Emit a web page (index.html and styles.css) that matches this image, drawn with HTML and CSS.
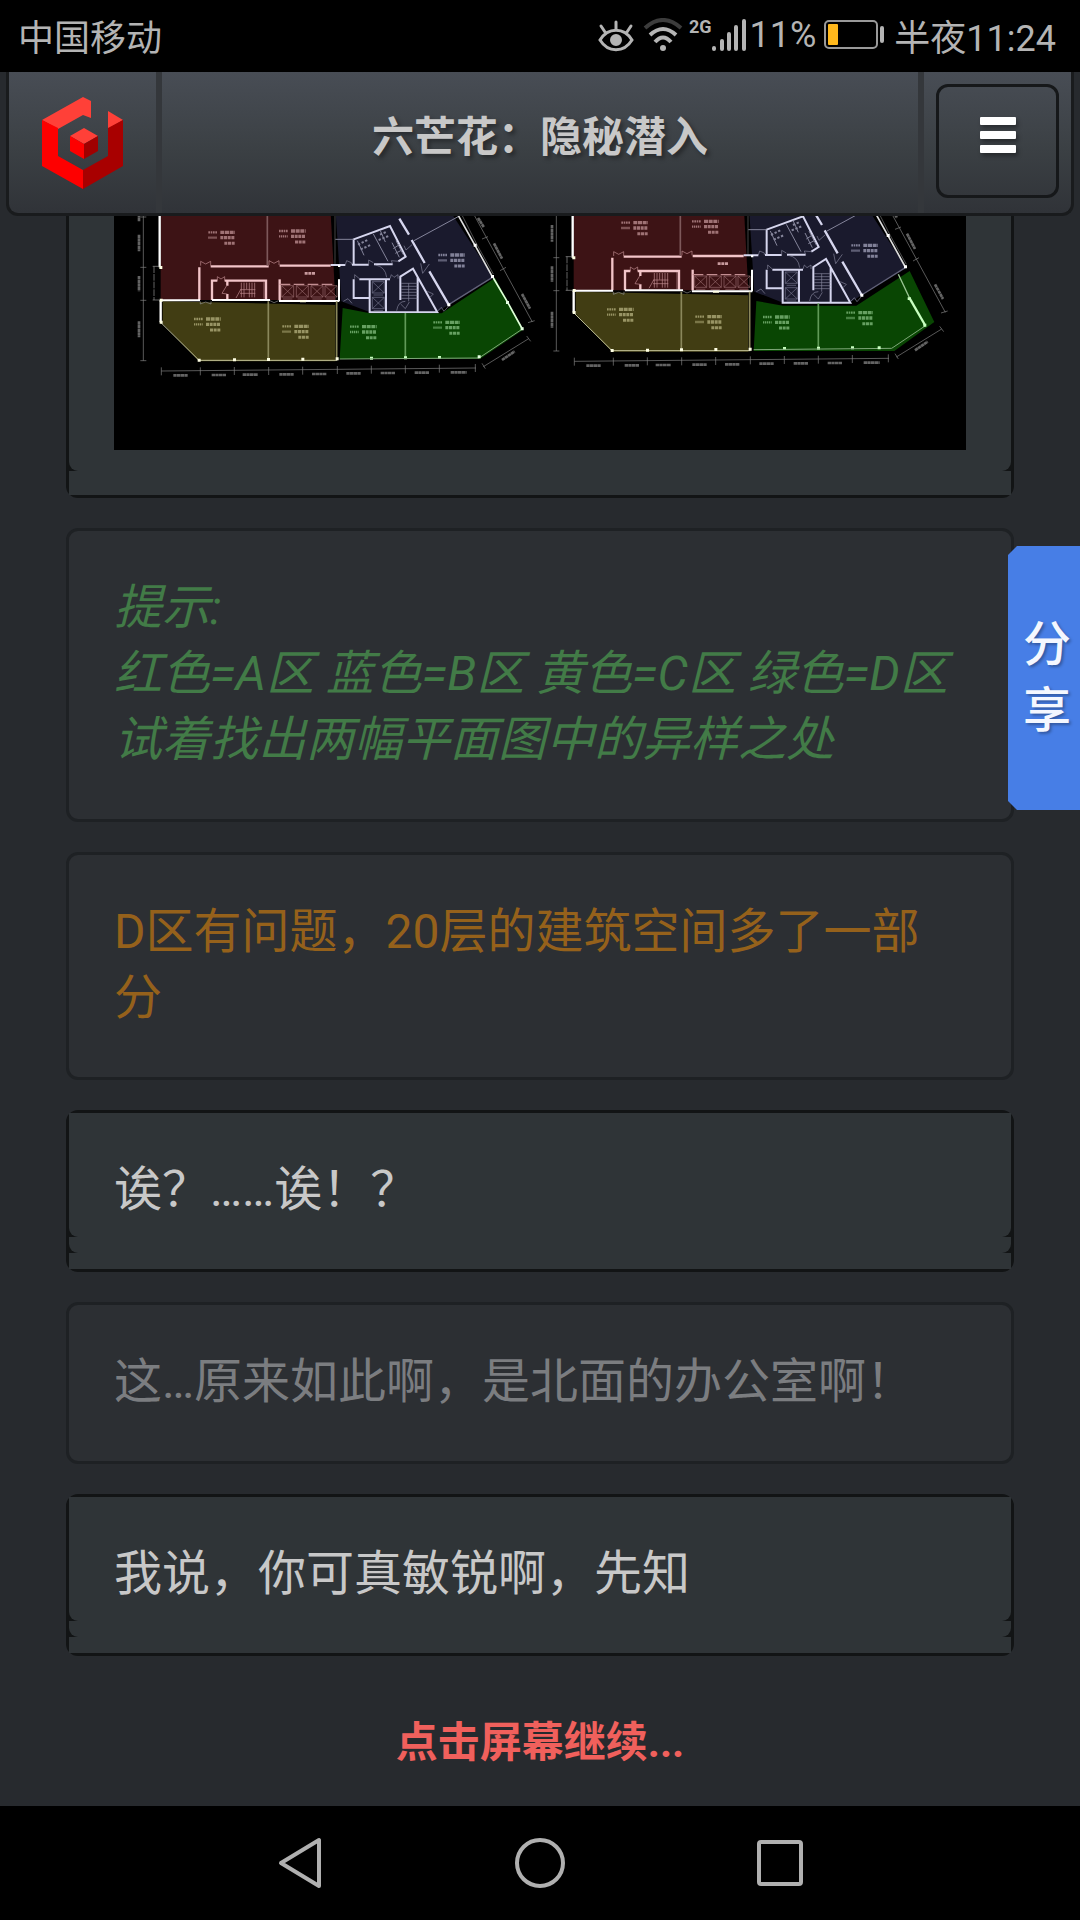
FILE: index.html
```html
<!DOCTYPE html>
<html lang="zh-CN">
<head>
    <meta charset="UTF-8">
    <meta name="viewport" content="width=device-width, initial-scale=1.0">
    <title>六芒花：隐秘潜入</title>
    <link rel="stylesheet" href="styles.css">
</head>
<body>
    <!-- 状态栏 -->
    <div class="status-bar">
        <span>中国移动</span>
        <div class="status-right">
            <svg class="eye" width="36" height="34" viewBox="0 0 36 34" fill="none" stroke="#b4b4b4" stroke-width="3" stroke-linecap="round">
                <path d="M2 22C10 9 26 9 34 22C26 35 10 35 2 22Z"/>
                <circle cx="18" cy="22" r="5" fill="#b4b4b4" stroke="#b4b4b4" stroke-width="2"/>
                <path d="M18 11V4M7 14L3 8M29 14L33 8"/>
            </svg>
            <svg class="wifi" width="40" height="34" viewBox="0 0 40 34" fill="none" stroke="#b4b4b4" stroke-width="4">
                <path d="M2 10Q20 -6 38 10" stroke="#3c3c3c"/>
                <path d="M7 17Q20 5 33 17"/>
                <path d="M12 24Q20 15 28 24"/>
                <circle cx="20" cy="30" r="3" fill="#b4b4b4" stroke="none"/>
            </svg>
            <span class="net">2G</span>
            <svg class="signal" width="34" height="34" viewBox="0 0 34 34" stroke="#b4b4b4" stroke-width="4" stroke-linecap="round">
                <path d="M2 30V31M10 23V31M17 16V31M24 9V31M32 3V31"/>
            </svg>
            <span class="percent">11%</span>
            <svg class="battery" width="62" height="34" viewBox="0 0 62 34">
                <rect x="1" y="3" width="52" height="27" rx="4" fill="none" stroke="#999" stroke-width="2"/>
                <rect x="4" y="6" width="10" height="21" rx="1" fill="#ffb81c"/>
                <rect x="56" y="8" width="4" height="17" rx="2" fill="#b4b4b4"/>
            </svg>
            <span>半夜11:24</span>
        </div>
    </div>

    <header>
        <a href="#home" class="logo" aria-label="首页">
            <svg width="82" height="92" viewBox="0 0 82 92">
                <path d="M0 23L41 0L49 4V21L41 18L16 32L0 23Z" fill="#ff4038"/>
                <path d="M66 14L81 23L66 32Z" fill="#ff4038"/>
                <path d="M0 23L16 31V59L41 73V92L0 69Z" fill="#fe0000"/>
                <path d="M81 23V69L41 92V73L66 59V31Z" fill="#a80000"/>
                <path d="M28 39L42 31L56 39L42 47Z" fill="#ff4038"/>
                <path d="M28 39L42 47V62L28 54Z" fill="#fe0000"/>
                <path d="M56 39L42 47V62L56 54Z" fill="#a00000"/>
            </svg>
        </a>
        <h1>六芒花：隐秘潜入</h1>
        <div class="menu">
            <button class="menu-button" aria-label="菜单">
                <span></span>
                <span></span>
                <span></span>
            </button>
        </div>
    </header>

    <main>
        <!-- 平面图 -->
        <div class="card active first">
            <div class="layer map">
                <svg class="plan" viewBox="-48 6 2556 702">
                    <defs>
                        <g id="note" fill="none" stroke="currentColor" opacity="0.6">
                            <path d="M0 5H26" stroke-width="7" stroke-dasharray="5 2"/>
                            <path d="M36 5H80" stroke-width="10" stroke-dasharray="12 2"/>
                            <path d="M0 21H26" stroke-width="7" stroke-dasharray="4 2"/>
                            <path d="M36 21H80" stroke-width="10" stroke-dasharray="9 2"/>
                            <path d="M48 38H80" stroke-width="9" stroke-dasharray="9 2"/>
                        </g>
                        <g id="lift" fill="none" stroke="currentColor" stroke-width="2">
                            <path d="M0 0H36V34H0ZM0 0L36 34M36 0L0 34M4 40H32"/>
                        </g>
                        <g id="building">
                            <path d="M92 -40H600L616 258H92Z" fill="#3d1315"/>
                            <path d="M98 262L616 273V442H207L98 328Z" fill="#413d13"/>
                            <path d="M615 -40H940L1088 188L955 273L920 295H720L634 262Z" fill="#1a1a2d"/>

                            <!-- 红区 -->
                            <g fill="none" stroke="#f2c4c8" stroke-width="7">
                                <path d="M242 157H416M449 155H602M208 160V258"/>
                                <path d="M246 258V200H262M284 200H408V256M292 200V215M292 240V256"/>
                                <path d="M449 196V258"/>
                            </g>
                            <g fill="none" stroke="#c38e92" stroke-width="2">
                                <path d="M412 -40V155" stroke="#7d585a" stroke-width="5"/>
                                <path d="M212 155V142L227 150L242 142V155M417 153V140L432 148L447 140V153M262 200V188L273 195L284 188V200M290 215L276 238L292 240"/>
                                <path d="M334 206V250M342 206V250M350 206V226M358 206V250M366 206V250M374 206V250M330 227H376M330 238H376M318 252L332 227M402 203V254"/>
                                <path d="M449 211H616" stroke-width="4" stroke-dasharray="32 10"/>
                            </g>
                            <g color="#96686b">
                                <use href="#lift" x="455" y="215"/>
                                <use href="#lift" x="499" y="215"/>
                                <use href="#lift" x="543" y="215"/>
                                <use href="#lift" x="585" y="215"/>
                            </g>
                            <path d="M524 178H556" stroke="#c79a9d" stroke-width="8" stroke-dasharray="9 2"/>

                            <!-- 外墙 -->
                            <g fill="none" stroke="#fff">
                                <path d="M89 -40V160M92 258V325" stroke-width="7"/>
                                <path d="M92 259H210M246 258H420M447 261H628M627 196V261" stroke-width="6"/>
                                <path d="M92 325L207 439H622" stroke="#c4c49a" stroke-width="3"/>
                                <path d="M415 262V438M620 262V438" stroke="#8a875c" stroke-width="5"/>
                                <path d="M72 157V258M68 157H92M68 258H92" stroke="#999" stroke-width="2" stroke-dasharray="20 3"/>
                                <path d="M211 262V270L227 264L243 270V262M420 260L432 266L446 260" stroke="#8f8f8f" stroke-width="2"/>
                                <path d="M615 -40V155" stroke="#333" stroke-width="4"/>
                            </g>
                            <path d="M88 156h9v9h-9zM89 254h9v9h-9zM89 320h9v9h-9zM203 434h9v9h-9zM309 433h9v9h-9zM411 432h9v9h-9zM514 431h9v9h-9zM617 430h9v9h-9zM510 259h18v6h-18z" fill="#ffffe4"/>

                            <!-- 蓝区 -->
                            <g transform="translate(600 0)">
                                <g fill="none" stroke="#d6d6ee" stroke-width="6">
                                    <path d="M2 153H46M66 152H116M132 151H188M71 150V76L180 36L227 128L205 142"/>
                                    <path d="M208 14L237 62M245 78L284 147M298 172L356 272" stroke-width="7"/>
                                    <path d="M71 196V252H118M88 196H180M119 196V295H322L249 164L211 188V258M168 196V292M263 190V292"/>
                                </g>
                                <g fill="none" stroke="#85859b" stroke-width="2">
                                    <path d="M16 76H71M252 80L388 6M130 60L174 142M82 80L102 124M150 48L166 84M186 86L208 130M198 80L220 122M190 104L208 92M196 118L216 108" stroke-width="3"/>
                                    <path d="M84 92L112 78M92 106L124 92M150 62L172 52M146 78L176 66" stroke-width="6" stroke-dasharray="7 5"/>
                                    <path d="M46 152L50 140L64 146V152M116 151V138L130 146M188 151L184 140L206 142M222 95L228 108L246 92M74 194V182L88 194M180 194L184 182L192 190L204 182V194M272 148L278 178L298 150M292 232L310 240L300 250M136 153Q166 158 170 190M200 290Q204 262 226 262M212 270L226 284L238 264M40 262L54 254L66 268M322 292L334 280L342 292L356 276"/>
                                    <path d="M213 208H262M213 217H262M213 226H262M213 235H262M213 244H262M213 253H262M236 208V262"/>
                                </g>
                                <g color="#74748c">
                                    <use href="#lift" x="127" y="203"/>
                                    <use href="#lift" x="127" y="250"/>
                                </g>
                                <g color="#c6c6e0"><use href="#note" x="325" y="118"/></g>
                                <path d="M356 272L487 190" stroke="#62627a" stroke-width="4"/>
                                <path d="M360 -40L435 94L487 188" fill="none" stroke="#ddd" stroke-width="5"/>
                                <path d="M374 -40L442 94L490 180" fill="none" stroke="#777" stroke-width="2"/>
                                <path d="M431 89h9v9h-9zM483 183h9v9h-9zM352 268h9v9h-9zM24 152h7v7h-7z" fill="#fff"/>
                            </g>

                            <!-- 尺寸线 -->
                            <g fill="none" stroke="#858585" stroke-width="2">
                                <path d="M40 -40V440M31 9H49M31 160H49M31 259H49M31 440H49"/>
                                <path d="M94 471L1038 462M94 460V484M211 460V484M313 459V483M416 459V483M518 458V482M622 456V480M724 455V479M826 454V478M928 452V476M1036 450V474"/>
                                <path d="M1020 -20L1207 324M1056 75L1074 68M1110 170L1128 160M1194 326L1214 320M1060 458L1196 374M1056 448L1066 464M1190 366L1202 382"/>
                                <g stroke-width="8" stroke-dasharray="10 1" opacity="0.75">
                                    <path d="M130 484H174M245 483H289M338 482H384M448 481H492M546 480H590M649 478H692M752 477H796M854 476H898M962 475H1010"/>
                                    <path d="M27 62V112M27 186V232M27 322V370M27 -10V22"/>
                                    <path d="M1044 12L1062 40M1092 88L1116 134M1176 240L1200 284M1116 438L1154 412"/>
                                </g>
                            </g>

                            <g color="#e0b2b5">
                                <use href="#note" x="235" y="50"/>
                                <use href="#note" x="447" y="46"/>
                            </g>
                            <g color="#d2ce9a">
                                <use href="#note" x="192" y="310"/>
                                <use href="#note" x="457" y="332"/>
                            </g>
                        </g>
                        <g id="green-notes" color="#a4dca0">
                            <use href="#note" x="660" y="333"/>
                            <use href="#note" x="910" y="320"/>
                            <path d="M826 297V432" stroke="#609a58" stroke-width="5"/>
                            <path d="M720 428h9v9h-9zM822 427h9v9h-9zM924 426h9v9h-9z" fill="#c8ffc0"/>
                        </g>
                    </defs>

                    <rect x="-48" y="6" width="2556" height="702" fill="#000"/>

                    <use href="#building"/>
                    <path d="M638 282L720 298H935L1095 192L1180 347L1050 435H629Z" fill="#094603"/>
                    <use href="#green-notes"/>
                    <path d="M1090 192L1133 265L1177 345" fill="none" stroke="#dfffd8" stroke-width="5"/>
                    <path d="M629 435L1047 432L1177 345" fill="none" stroke="#7fa879" stroke-width="3"/>
                    <path d="M1043 424h9v9h-9zM1128 261h9v9h-9zM1172 340h9v9h-9z" fill="#e4ffe0"/>

                    <g transform="translate(1239 -29)">
                        <use href="#building"/>
                        <path d="M640 290L720 304H940L1100 200L1174 353L1054 440H632Z" fill="#094603"/>
                        <use href="#green-notes"/>
                        <path d="M1066 210L1100 282" fill="none" stroke="#9cc796" stroke-width="4"/>
                        <path d="M1100 282L1146 362" fill="none" stroke="#c8ffc0" stroke-width="7"/>
                        <path d="M632 436L1046 432L1146 365" fill="none" stroke="#7fa879" stroke-width="3"/>
                        <path d="M1004 426h9v9h-9zM1094 279h10v8h-10zM1141 358h9v9h-9z" fill="#c8ffc0"/>
                    </g>
                </svg>
            </div>
            <div class="layer"></div>
        </div>

        <div class="card">
            <p class="hint">提示:<br>红色=A区 蓝色=B区 黄色=C区 绿色=D区<br>试着找出两幅平面图中的异样之处</p>
        </div>

        <div class="card">
            <p class="answer">D区有问题，20层的建筑空间多了一部分</p>
        </div>

        <div class="card active">
            <p class="layer">诶？……诶！？</p>
            <div class="layer"></div>
            <div class="layer"></div>
        </div>

        <div class="card">
            <p>这…原来如此啊，是北面的办公室啊！</p>
        </div>

        <div class="card active">
            <p class="layer">我说，你可真敏锐啊，先知</p>
            <div class="layer"></div>
            <div class="layer"></div>
        </div>

        <p class="continue">点击屏幕继续...</p>
    </main>

    <button class="share">分<br>享</button>

    <!-- 系统导航 -->
    <nav>
        <button aria-label="返回">
            <svg width="50" height="56" viewBox="0 0 50 56" fill="none" stroke="#b0b0b0" stroke-width="4" stroke-linejoin="round">
                <path d="M44 5V51L6 28Z"/>
            </svg>
        </button>
        <button aria-label="主页">
            <svg width="50" height="56" viewBox="0 0 50 56" fill="none" stroke="#b0b0b0" stroke-width="4">
                <circle cx="25" cy="28" r="23"/>
            </svg>
        </button>
        <button aria-label="最近任务">
            <svg width="50" height="56" viewBox="0 0 50 56" fill="none" stroke="#b0b0b0" stroke-width="4">
                <rect x="4" y="7" width="42" height="42" rx="2"/>
            </svg>
        </button>
    </nav>
</body>
</html>
```
FILE: styles.css
```css
* {
    box-sizing: border-box;
}

body {
    margin: 0;
    min-height: 100vh;
    display: flex;
    flex-direction: column;
    position: relative;
    background: #272a2e;
    color: #7b7d80;
    font-family: Roboto, 'Noto Sans CJK SC', sans-serif;
}

p, h1 {
    margin: 0;
}

button {
    margin: 0;
    padding: 0;
    border: 0;
    background: none;
    font-family: inherit;
}

svg {
    display: block;
}

/* 状态栏 */
.status-bar {
    display: flex;
    justify-content: space-between;
    align-items: center;
    height: 72px;
    padding: 0 24px 2px 18px;
    background: #000;
    color: #b4b4b4;
    font-size: 36px;
}

.status-right {
    display: flex;
    align-items: center;
}

.wifi {
    margin: 0 6px 0 9px;
}

.net {
    align-self: flex-start;
    font-size: 18px;
    font-weight: 700;
    line-height: 36px;
}

.percent {
    margin: 0 8px 0 4px;
}

.battery {
    margin-right: 8px;
}

/* 顶部 */
header {
    display: flex;
    align-items: stretch;
    height: 144px;
    margin: 0 6px;
    border: 3px solid #191b1d;
    border-top: 0;
    border-radius: 0 0 12px 12px;
    background: linear-gradient(#484d55, #3b4044 55%, #303338);
}

.logo {
    display: flex;
    align-items: center;
    justify-content: center;
    width: 153px;
    border-right: 6px solid #34373b;
}

h1 {
    flex: 1;
    color: #c8c8c8;
    font-size: 42px;
    line-height: 132px;
    text-align: center;
    text-shadow: 3px 3px 4px rgba(0, 0, 0, 0.35);
}

.menu {
    width: 153px;
    padding: 12px;
    border-left: 6px solid #34373b;
}

.menu-button {
    display: flex;
    flex-direction: column;
    align-items: center;
    justify-content: center;
    gap: 6px;
    width: 100%;
    height: 114px;
    padding: 0 24px 12px;
    border: 3px solid #16181a;
    border-radius: 12px;
}

.menu-button span {
    width: 36px;
    height: 8px;
    border-radius: 1px;
    background: #fff;
    box-shadow: 2px 3px 4px rgba(0, 0, 0, 0.35);
}

/* 对话 */
main {
    flex: 1;
    padding: 0 66px;
}

.card {
    margin-bottom: 30px;
    border: 3px solid #1e2124;
    border-radius: 12px;
    background: #2c2f33;
}

.card p {
    padding: 44px 45px 46px;
    font-size: 48px;
    line-height: 66px;
}

.card .hint {
    color: #427b47;
    font-style: italic;
}

.card .answer {
    color: #95611b;
}

.card.active {
    border-color: #121415;
    background: #121415;
    color: #c8c8c8;
}

.card.first {
    border-top: 0;
    border-radius: 0 0 12px 12px;
}

.layer {
    min-height: 16px;
    border-radius: 0 0 9px 9px;
    background: #2f3437;
}

.layer:last-child {
    border-radius: 0;
}

.card .layer:first-child {
    padding-bottom: 14px;
}

.card .map {
    padding: 0 45px;
}

.card .map:first-child {
    padding-bottom: 21px;
}

.map + .layer {
    min-height: 24px;
}

.plan {
    width: 100%;
    height: auto;
}

.continue {
    padding: 24px 0 30px;
    color: #f0605c;
    font-size: 42px;
    font-weight: 700;
    line-height: 66px;
    text-align: center;
}

.share {
    position: absolute;
    top: 546px;
    right: 0;
    width: 72px;
    height: 264px;
    padding: 0 0 0 6px;
    background: #477ee6;
    clip-path: polygon(9px 0, 100% 0, 100% 100%, 9px 100%, 0 255px, 0 9px);
    color: #f4f7ff;
    font-size: 48px;
    font-weight: 500;
    line-height: 66px;
    text-shadow: 2px 2px 3px rgba(0, 0, 0, 0.3);
}

nav {
    display: flex;
    justify-content: center;
    align-items: center;
    gap: 190px;
    height: 114px;
    background: #000;
}
```
